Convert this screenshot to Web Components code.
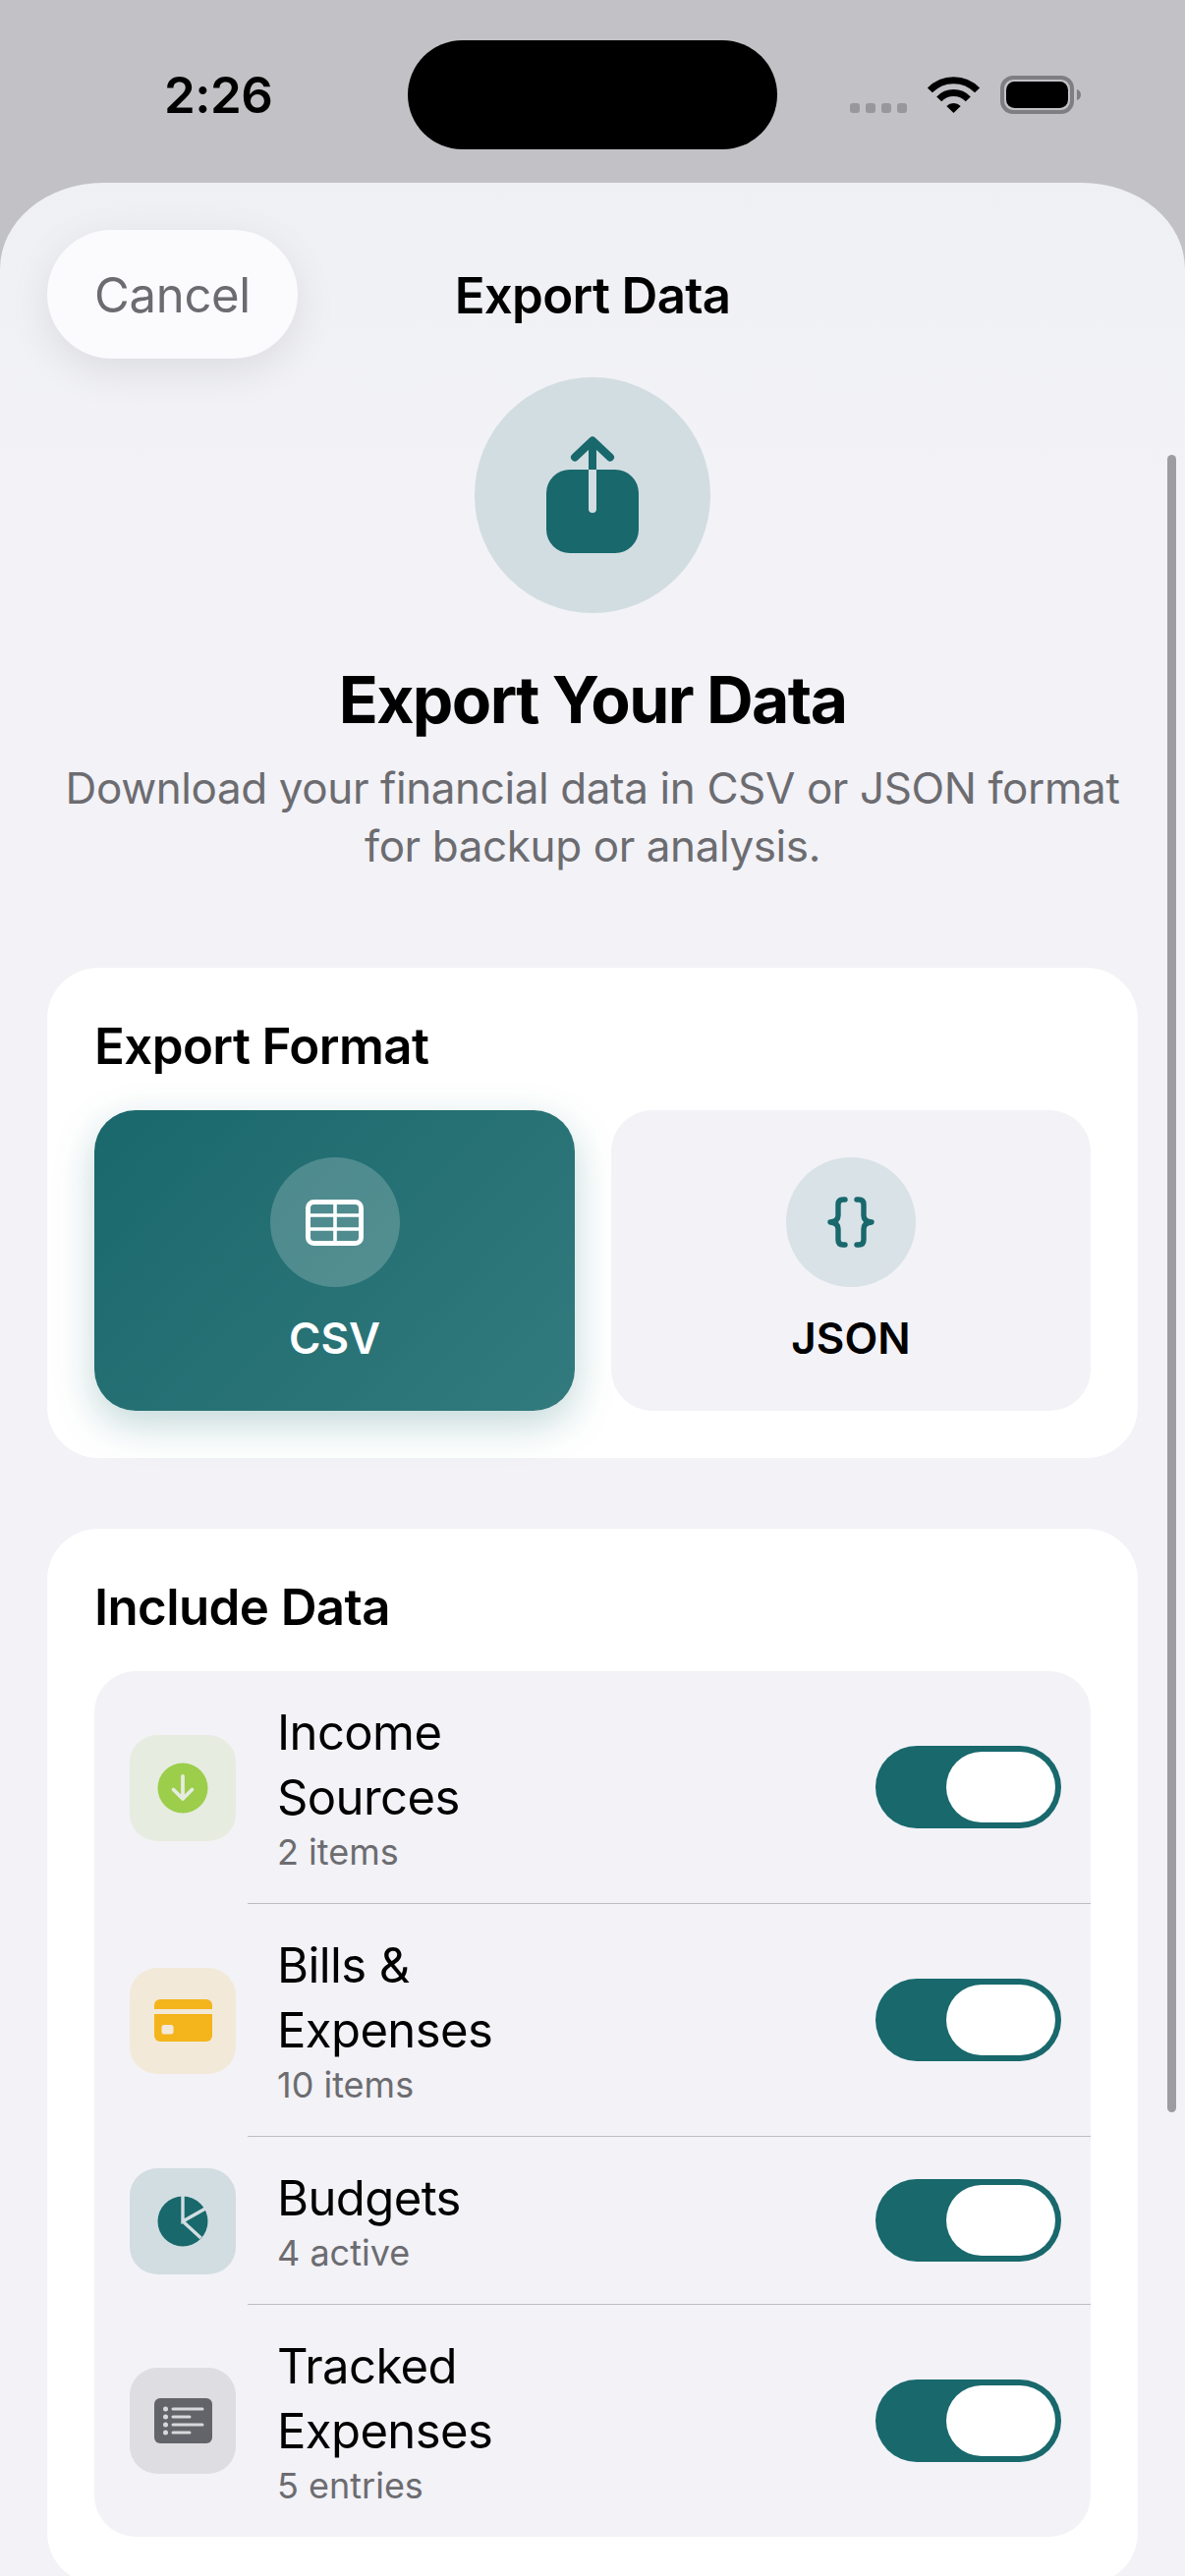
<!DOCTYPE html>
<html>
<head>
<meta charset="utf-8">
<title>Export Data</title>
<style>
  html, body { margin: 0; padding: 0; }
  body {
    width: 1206px;
    height: 2622px;
    overflow: hidden;
    background: #c2c2c6;
    font-family: Inter, "Liberation Sans", sans-serif;
  }
</style>
</head>
<body>
<status-bar></status-bar>
<export-sheet>
  <nav-bar heading="Export Data" action="Cancel"></nav-bar>
  <export-hero heading="Export Your Data">Download your financial data in CSV or JSON format<br>for backup or analysis.</export-hero>

  <section-card heading="Export Format">
    <div style="display:grid;grid-template-columns:489px 488px;gap:37px">
      <format-option label="CSV" selected>
        <svg width="59" height="47" viewBox="0 0 59 47" fill="none" stroke="#fff">
          <rect x="2.500" y="2.500" width="54" height="42" rx="6" stroke-width="5"/>
          <path d="M30 3v41M3 16h53M3 30h53" stroke-width="3.600"/>
        </svg>
      </format-option>
      <format-option label="JSON">
        <svg width="50" height="52" viewBox="0 0 50 52" fill="none" stroke="#18686c" stroke-width="5.400" stroke-linecap="round" stroke-linejoin="round">
          <path d="M19 3h-2c-3.500 0-5 2-5 5v11c0 4-2 6.500-8 7 6 .5 8 3 8 7v11c0 3 1.500 5 5 5h2"/>
          <path d="M31 3h2c3.500 0 5 2 5 5v11c0 4 2 6.500 8 7-6 .5-8 3-8 7v11c0 3-1.500 5-5 5h-2"/>
        </svg>
      </format-option>
    </div>
  </section-card>

  <section-card heading="Include Data" style="margin-top:72px">
    <data-list>
      <data-row heading="Income Sources" detail="2 items" tint="#e6ecdf">
        <svg width="52" height="52" viewBox="0 0 52 52" fill="none">
          <circle cx="26" cy="26" r="25.500" fill="#9ccd4b"/>
          <path d="M26 14v23M16.500 27.500 26 37l9.500-9.500" stroke="#e6ecdf" stroke-width="3.800" stroke-linecap="round" stroke-linejoin="round"/>
        </svg>
      </data-row>
      <data-row heading="Bills &amp; Expenses" detail="10 items" tint="#f3e9d9">
        <svg width="59" height="43" viewBox="0 0 59 43">
          <path d="M0 10V6a6 6 0 0 1 6-6h47a6 6 0 0 1 6 6v4z" fill="#f4b41c"/>
          <path d="M0 15h59v22a6 6 0 0 1-6 6H6a6 6 0 0 1-6-6z" fill="#f4b41c"/>
          <rect x="7.500" y="26" width="12" height="9.500" rx="2.500" fill="#f3e9d9"/>
        </svg>
      </data-row>
      <data-row heading="Budgets" detail="4 active" tint="#d2dde2">
        <svg width="52" height="52" viewBox="0 0 52 52" fill="none">
          <circle cx="26" cy="26" r="25.500" fill="#18686c"/>
          <path d="M26 0v26L49 13M26 26l18.500 17" stroke="#d2dde2" stroke-width="3.400"/>
        </svg>
      </data-row>
      <data-row heading="Tracked Expenses" detail="5 entries" tint="#dedde2" last>
        <svg width="59" height="46" viewBox="0 0 59 46">
          <rect width="59" height="46" rx="6" fill="#636469"/>
          <g fill="#d8d8dc">
            <circle cx="11.500" cy="11" r="2.500"/><circle cx="11.500" cy="19" r="2.500"/>
            <circle cx="11.500" cy="27" r="2.500"/><circle cx="11.500" cy="35" r="2.500"/>
            <rect x="17.500" y="9.500" width="33" height="3" rx="1.500"/>
            <rect x="17.500" y="17.500" width="20" height="3" rx="1.500"/>
            <rect x="17.500" y="25.500" width="33" height="3" rx="1.500"/>
            <rect x="17.500" y="33.500" width="20" height="3" rx="1.500"/>
          </g>
        </svg>
      </data-row>
    </data-list>
  </section-card>
</export-sheet>

<script>
class StatusBar extends HTMLElement {
  constructor() {
    super();
    this.shadowDOM = this.attachShadow({ mode: 'open' });
  }

  connectedCallback() {
    this.shadowDOM.innerHTML = `
      <style>
        :host {
          display: grid;
          grid-template-columns: 415px 376px 415px;
          align-items: center;
          height: 186px;
          box-sizing: border-box;
          padding-bottom: 34px;
          padding-top: 41px;
        }
        #time {
          font-size: 51px;
          line-height: 60px;
          font-weight: 600;
          letter-spacing: -0.5px;
          color: #000;
          padding-left: 167px;
        }
        #island {
          height: 111px;
          border-radius: 56px;
          background: #000;
        }
        #right {
          padding-left: 74px;
          display: flex;
        }
      </style>
      <div id="time">2:26</div>
      <div id="island"></div>
      <div id="right">
        <svg width="236" height="40" viewBox="0 0 236 40" fill="none">
          <g fill="#98989c">
            <rect x="0" y="28" width="10" height="10" rx="3"/>
            <rect x="16" y="28" width="10" height="10" rx="3"/>
            <rect x="32" y="28" width="10" height="10" rx="3"/>
            <rect x="48" y="28" width="10" height="10" rx="3"/>
          </g>
          <path d="M81.400 14.900A33.500 33.500 0 0 1 129.600 14.900" stroke="#000" stroke-width="7"/>
          <path d="M90.700 23.900A20.500 20.500 0 0 1 120.300 23.900" stroke="#000" stroke-width="7"/>
          <path d="M105.500 38 98.300 31A10 10 0 0 1 112.700 31Z" fill="#000"/>
          <rect x="155" y="2" width="71" height="35" rx="11" stroke="#7f7f83" stroke-width="4"/>
          <rect x="159" y="6" width="63" height="27" rx="8.500" fill="#000"/>
          <path d="M231 14c2.500.8 4 3 4 5.500s-1.500 4.700-4 5.500z" fill="#7f7f83"/>
        </svg>
      </div>
    `;
  }
}

class ExportSheet extends HTMLElement {
  constructor() {
    super();
    this.shadowDOM = this.attachShadow({ mode: 'open' });
  }

  connectedCallback() {
    this.shadowDOM.innerHTML = `
      <style>
        :host {
          display: block;
          position: relative;
          height: 2436px;
          overflow: hidden;
          padding: 0 48px;
          box-sizing: border-box;
          border-radius: 105px 105px 0 0 / 88px 88px 0 0;
          background: linear-gradient(#eff0f4, #f2f2f7 300px);
        }
        #scroll {
          position: absolute;
          right: 9px;
          top: 277px;
          width: 9px;
          height: 1687px;
          border-radius: 5px;
          background: #9d9da1;
        }
      </style>
      <slot></slot>
      <div id="scroll"></div>
    `;
  }
}

class NavBar extends HTMLElement {
  constructor() {
    super();
    this.shadowDOM = this.attachShadow({ mode: 'open' });
  }

  connectedCallback() {
    this.shadowDOM.innerHTML = `
      <style>
        :host {
          display: grid;
          grid-template-columns: 1fr auto 1fr;
          align-items: center;
          padding-top: 48px;
        }
        button {
          justify-self: start;
          width: 255px;
          height: 131px;
          border: 0;
          border-radius: 66px;
          background: #fbfbfe;
          box-shadow: 0 12px 44px rgba(0, 0, 0, 0.09);
          color: #6c6c70;
          font: 400 49px Inter, "Liberation Sans", sans-serif;
          letter-spacing: -0.3px;
          padding: 2px 0 0;
        }
        h1 {
          margin: 2px 0 0;
          font-size: 51px;
          font-weight: 600;
          letter-spacing: -0.7px;
          color: #000;
        }
      </style>
      <button>${this.getAttribute('action')}</button>
      <h1>${this.getAttribute('heading')}</h1>
      <span></span>
    `;
  }
}

class ExportHero extends HTMLElement {
  constructor() {
    super();
    this.shadowDOM = this.attachShadow({ mode: 'open' });
  }

  connectedCallback() {
    this.shadowDOM.innerHTML = `
      <style>
        :host {
          display: flex;
          flex-direction: column;
          align-items: center;
          text-align: center;
          padding: 19px 0 94px;
        }
        svg { display: block; }
        h2 {
          margin: 48px 0 0;
          font-size: 66px;
          line-height: 80px;
          font-weight: 700;
          letter-spacing: -1.6px;
          color: #000;
        }
        p {
          margin: 21px 0 0;
          font-size: 44px;
          line-height: 59px;
          letter-spacing: -0.4px;
          color: #6c6c70;
          white-space: nowrap;
        }
      </style>
      <svg width="240" height="240" viewBox="0 0 240 240" fill="none">
        <circle cx="120" cy="120" r="120" fill="#d2dde2"/>
        <rect x="73" y="94" width="94" height="85" rx="24" fill="#18686c"/>
        <path d="M120 66v28" stroke="#18686c" stroke-width="8"/>
        <path d="M116 94h8v40a4 4 0 0 1-8 0z" fill="#d2dde2"/>
        <path d="M102 81.500 120 64.500l18 17" stroke="#18686c" stroke-width="8" stroke-linecap="round" stroke-linejoin="round"/>
      </svg>
      <h2>${this.getAttribute('heading')}</h2>
      <p><slot></slot></p>
    `;
  }
}

class SectionCard extends HTMLElement {
  constructor() {
    super();
    this.shadowDOM = this.attachShadow({ mode: 'open' });
  }

  connectedCallback() {
    this.shadowDOM.innerHTML = `
      <style>
        :host {
          display: block;
          background: #fff;
          border-radius: 52px;
          padding: 47px 48px 48px;
        }
        h3 {
          margin: 0 0 32px;
          font-size: 51px;
          line-height: 66px;
          font-weight: 600;
          letter-spacing: -0.6px;
          color: #000;
        }
      </style>
      <h3>${this.getAttribute('heading')}</h3>
      <slot></slot>
    `;
  }
}

class FormatOption extends HTMLElement {
  constructor() {
    super();
    this.shadowDOM = this.attachShadow({ mode: 'open' });
  }

  connectedCallback() {
    this.shadowDOM.innerHTML = `
      <style>
        :host {
          display: flex;
          flex-direction: column;
          align-items: center;
          height: 306px;
          box-sizing: border-box;
          padding-top: 48px;
          border-radius: 42px;
          background: #f2f2f7;
          color: #000;
          --chip: #d8e2e7;
        }
        :host([selected]) {
          background: linear-gradient(135deg, #1a686c, #327a7d);
          box-shadow: 0 14px 40px rgba(24, 104, 108, 0.26);
          color: #fff;
          --chip: rgba(255, 255, 255, 0.2);
        }
        #chip {
          width: 132px;
          height: 132px;
          border-radius: 50%;
          background: var(--chip);
          display: flex;
          align-items: center;
          justify-content: center;
        }
        #label {
          margin-top: 25px;
          font-size: 44px;
          line-height: 54px;
          font-weight: 600;
        }
      </style>
      <div id="chip"><slot></slot></div>
      <div id="label">${this.getAttribute('label')}</div>
    `;
  }
}

class DataList extends HTMLElement {
  constructor() {
    super();
    this.shadowDOM = this.attachShadow({ mode: 'open' });
  }

  connectedCallback() {
    this.shadowDOM.innerHTML = `
      <style>
        :host {
          display: block;
          background: #f2f2f7;
          border-radius: 42px;
          overflow: hidden;
        }
      </style>
      <slot></slot>
    `;
  }
}

class DataRow extends HTMLElement {
  constructor() {
    super();
    this.shadowDOM = this.attachShadow({ mode: 'open' });
  }

  connectedCallback() {
    this.shadowDOM.innerHTML = `
      <style>
        :host {
          display: flex;
          align-items: stretch;
          padding-left: 36px;
        }
        #tile {
          flex: none;
          align-self: center;
          width: 108px;
          height: 108px;
          border-radius: 28px;
          background: ${this.getAttribute('tint')};
          display: flex;
          align-items: center;
          justify-content: center;
        }
        #body {
          flex: 1;
          margin-left: 12px;
          padding: 30px;
          display: flex;
          align-items: center;
          justify-content: space-between;
          border-bottom: 1px solid #bcbcc1;
        }
        :host([last]) #body { border-bottom: 0; }
        #title {
          max-width: 250px;
          font-size: 49px;
          line-height: 66px;
          letter-spacing: -0.6px;
          color: #000;
        }
        #detail {
          font-size: 36px;
          line-height: 44px;
          color: #6c6c70;
        }
      </style>
      <div id="tile"><slot></slot></div>
      <div id="body">
        <div>
          <div id="title">${this.getAttribute('heading')}</div>
          <div id="detail">${this.getAttribute('detail')}</div>
        </div>
        <toggle-switch></toggle-switch>
      </div>
    `;
  }
}

class ToggleSwitch extends HTMLElement {
  constructor() {
    super();
    this.shadowDOM = this.attachShadow({ mode: 'open' });
  }

  connectedCallback() {
    this.shadowDOM.innerHTML = `
      <style>
        :host {
          display: flex;
          justify-content: flex-end;
          align-items: center;
          width: 189px;
          height: 84px;
          box-sizing: border-box;
          padding-right: 6px;
          border-radius: 42px;
          background: #18686c;
        }
        div {
          width: 111px;
          height: 72px;
          border-radius: 36px;
          background: #fff;
        }
      </style>
      <div></div>
    `;
  }
}

customElements.define('status-bar', StatusBar);
customElements.define('export-sheet', ExportSheet);
customElements.define('nav-bar', NavBar);
customElements.define('export-hero', ExportHero);
customElements.define('section-card', SectionCard);
customElements.define('format-option', FormatOption);
customElements.define('data-list', DataList);
customElements.define('data-row', DataRow);
customElements.define('toggle-switch', ToggleSwitch);
</script>
</body>
</html>
